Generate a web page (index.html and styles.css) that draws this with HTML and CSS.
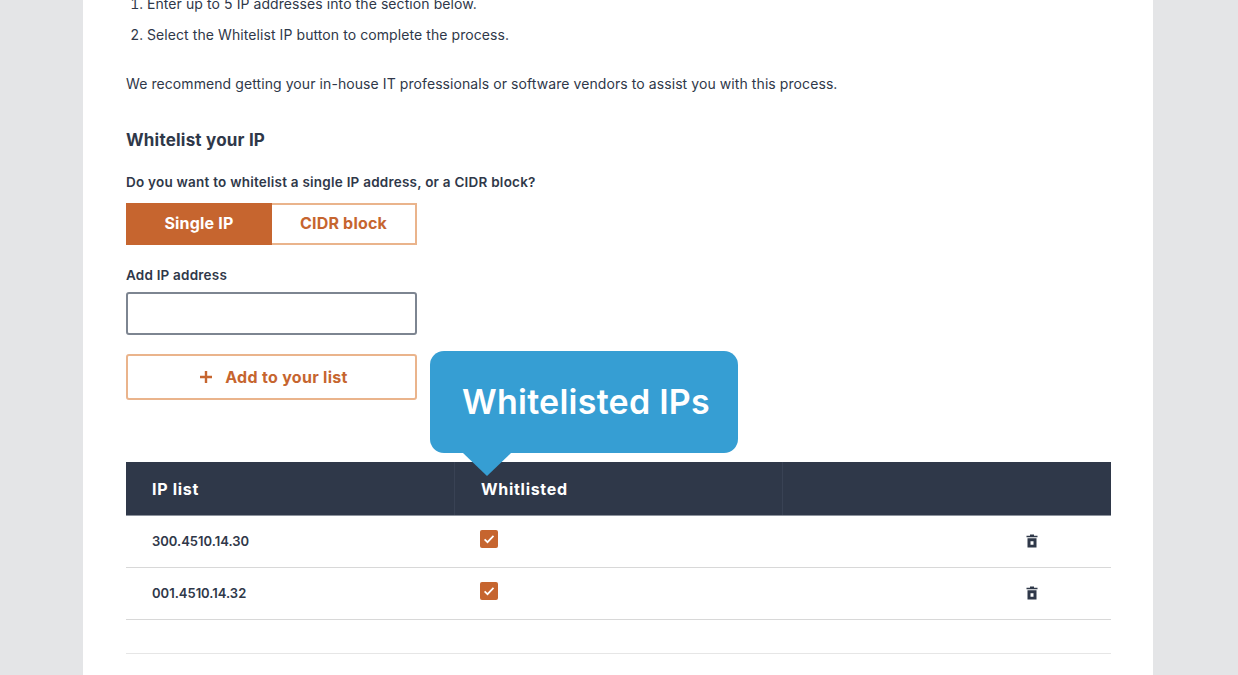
FILE: index.html
```html
<!DOCTYPE html>
<html lang="en">
<head>
    <meta charset="UTF-8">
    <meta name="viewport" content="width=device-width, initial-scale=1.0">
    <title>Whitelist your IP</title>
    <link rel="stylesheet" href="styles.css">
</head>
<body>
    <div class="card">
        <ol class="steps">
            <li>Enter up to 5 IP addresses into the section below.</li>
            <li>Select the Whitelist IP button to complete the process.</li>
        </ol>
        <p class="note">We recommend getting your in-house IT professionals or software vendors to assist you with this process.</p>

        <h2>Whitelist your IP</h2>
        <p class="question">Do you want to whitelist a single IP address, or a CIDR block?</p>
        <div class="toggle">
            <button class="toggle-btn active">Single IP</button>
            <button class="toggle-btn">CIDR block</button>
        </div>

        <label class="field-label" for="ip-input">Add IP address</label>
        <input id="ip-input" class="ip-input" type="text">
        <button class="add-btn">
            <svg width="14" height="14" viewBox="0 0 14 14"><path d="M7 1v12M1 7h12" stroke="#c6652f" stroke-width="2.4"/></svg>
            Add to your list
        </button>

        <div class="table-wrap">
            <div class="callout">Whitelisted IPs</div>
            <div class="row head">
                <div class="cell">IP list</div>
                <div class="cell">Whitlisted</div>
                <div class="cell"></div>
            </div>
            <div class="row">
                <div class="cell">300.4510.14.30</div>
                <div class="cell"><span class="check"><svg width="12" height="12" viewBox="0 0 12 12"><path d="M1.6 6.4l2.9 2.8 6-6.4" fill="none" stroke="#fff" stroke-width="1.7"/></svg></span></div>
                <div class="cell trash-cell"><svg width="12" height="14" viewBox="0 0 12 14"><path fill="#2f3849" d="M4 0.5h4v1.3h3.5V3.300H0.500V1.800H4zM1.500 4.200h9v9.300h-9zm3 3v3.500h3V7.200z"/></svg></div>
            </div>
            <div class="row">
                <div class="cell">001.4510.14.32</div>
                <div class="cell"><span class="check"><svg width="12" height="12" viewBox="0 0 12 12"><path d="M1.6 6.4l2.9 2.8 6-6.4" fill="none" stroke="#fff" stroke-width="1.7"/></svg></span></div>
                <div class="cell trash-cell"><svg width="12" height="14" viewBox="0 0 12 14"><path fill="#2f3849" d="M4 0.5h4v1.3h3.5V3.300H0.500V1.800H4zM1.500 4.200h9v9.300h-9zm3 3v3.500h3V7.200z"/></svg></div>
            </div>
            <div class="row empty"></div>
        </div>
    </div>
</body>
</html>
```

FILE: styles.css
```css
html, body {
    height: 100%;
}
body {
    margin: 0;
    overflow: hidden;
    background-color: #e4e5e7;
    font-family: "Inter", sans-serif;
    color: #2f3849;
}
.card {
    display: flow-root;
    width: 985px;
    height: 100%;
    margin-left: 83px;
    padding: 0 42px 0 43px;
    background-color: white;
}
.steps {
    margin: -7px 0 0;
    padding: 0 0 0 21px;
    font-size: 14px;
    line-height: 21px;
    letter-spacing: 0.08px;
}
.steps li {
    margin-bottom: 10px;
}
.note {
    margin: 28px 0 0;
    font-size: 14px;
    line-height: 21px;
    letter-spacing: 0.08px;
}
h2 {
    margin: 34px 0 0;
    font-size: 17px;
    line-height: 24px;
    font-weight: 700;
    letter-spacing: 0.2px;
}
.question {
    margin: 20px 0 0;
    font-size: 13.5px;
    line-height: 20px;
    font-weight: 600;
    letter-spacing: 0.23px;
}
.toggle {
    display: flex;
    width: 291px;
    height: 42px;
    margin-top: 11px;
}
.toggle-btn {
    flex: 1;
    padding: 0 0 2px;
    border: 2px solid #eab48c;
    border-left: none;
    background: white;
    color: #c6652f;
    font-family: inherit;
    font-size: 16px;
    font-weight: 700;
    letter-spacing: 0.2px;
}
.toggle-btn.active {
    flex: none;
    width: 146px;
    border: none;
    background-color: #c6652f;
    color: white;
}
.field-label {
    display: block;
    margin-top: 20px;
    font-size: 13.5px;
    line-height: 20px;
    font-weight: 600;
    letter-spacing: 0.2px;
}
.ip-input {
    display: block;
    box-sizing: border-box;
    width: 291px;
    height: 43px;
    margin-top: 7px;
    border: 2px solid #7d8591;
    border-radius: 3px;
}
.add-btn {
    display: flex;
    align-items: center;
    justify-content: center;
    gap: 12px;
    box-sizing: border-box;
    width: 291px;
    height: 46px;
    margin-top: 19px;
    padding: 0 0 0 4px;
    border: 2px solid #eab48c;
    border-radius: 3px;
    background: white;
    color: #c6652f;
    font-family: inherit;
    font-size: 16px;
    font-weight: 700;
    letter-spacing: 0.3px;
}
.table-wrap {
    position: relative;
    margin-top: 62px;
}
.callout {
    position: absolute;
    left: 304px;
    top: -111px;
    width: 308px;
    height: 102px;
    box-sizing: border-box;
    padding-top: 28px;
    padding-left: 32px;
    border-radius: 14px;
    background-color: #369ed3;
    color: white;
    font-size: 34px;
    line-height: 46px;
    font-weight: 600;
    letter-spacing: 0.25px;
}
.callout::after {
    content: "";
    position: absolute;
    left: 33px;
    top: 102px;
    border-left: 24px solid transparent;
    border-right: 24px solid transparent;
    border-top: 23px solid #369ed3;
}
.row {
    display: grid;
    grid-template-columns: 328px 328px 329px;
    height: 52px;
    padding-bottom: 2px;
    border-bottom: 1px solid #d8d8d8;
    box-sizing: border-box;
    font-size: 13px;
    font-weight: 600;
}
.row.head {
    height: 54px;
    padding-bottom: 0;
    border-bottom: 1px solid #8d939d;
    background-color: #2f3849;
    color: white;
    font-size: 16px;
    font-weight: 700;
    letter-spacing: 0.7px;
}
.row.empty {
    height: 34px;
    border-bottom-color: #e6e6e6;
}
.cell {
    display: flex;
    align-items: center;
    padding-left: 26px;
}
.head .cell + .cell {
    border-left: 1px solid #394254;
}
.trash-cell {
    padding-left: 244px;
}
.check {
    display: flex;
    align-items: center;
    justify-content: center;
    width: 18px;
    height: 18px;
    margin-top: -3px;
    border-radius: 2px;
    background-color: #c6652f;
}
```
